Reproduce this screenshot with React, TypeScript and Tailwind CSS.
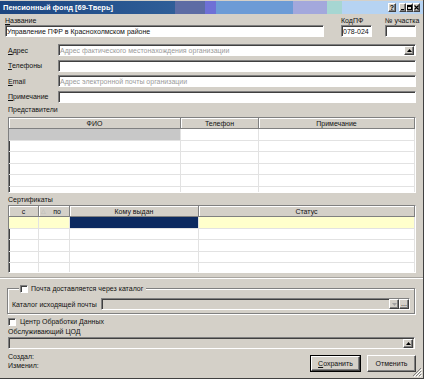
import React from "react";

const sunken =
  "border border-t-[#808080] border-l-[#808080] border-b-white border-r-white shadow-[inset_1px_1px_0_#404040]";
const raised =
  "border border-t-white border-l-white border-b-[#404040] border-r-[#404040] shadow-[inset_-1px_-1px_0_#808080]";

function U({ c }: { c: string }) {
  return <span className="underline underline-offset-1">{c}</span>;
}

function UpBtn() {
  return (
    <div className={`${raised} bg-[#d4d0c8] w-[10px] h-[9px] flex items-center justify-center shrink-0`}>
      <svg width="5" height="3" viewBox="0 0 5 3">
        <polygon points="0,3 5,3 2.5,0" fill="#000" />
      </svg>
    </div>
  );
}

function Field({
  w,
  text,
  placeholder,
  disabled,
  up,
}: {
  w: string;
  text?: string;
  placeholder?: string;
  disabled?: boolean;
  up?: boolean;
}) {
  return (
    <div
      className={`${sunken} ${w} h-[12px] ${disabled ? "bg-[#d4d0c8]" : "bg-white"} flex items-center pl-[1px] pr-[1px] overflow-hidden`}
    >
      <span
        className={`flex-1 whitespace-nowrap leading-[9px] ${placeholder ? "text-[#9a9a9a]" : "text-[#111]"}`}
      >
        {text ?? placeholder ?? ""}
      </span>
      {up && <UpBtn />}
    </div>
  );
}

function Grid({
  cols,
  headers,
  rows,
  height,
  cellClass,
  headerRender,
}: {
  cols: number[];
  headers: string[];
  rows: number;
  height: string;
  cellClass: (r: number, c: number) => string;
  headerRender?: (i: number) => React.ReactNode;
}) {
  return (
    <div className={`${sunken} ml-[8px] w-[408px] ${height} bg-white overflow-hidden`}>
      <div className="flex h-[11px] bg-[#d4d0c8]">
        {cols.map((w, i) => (
          <div
            key={i}
            style={{ width: w, flexGrow: i === cols.length - 1 ? 1 : 0 }}
            className="shrink-0 h-full border-r border-b border-r-[#808080] border-b-[#808080] shadow-[inset_1px_1px_0_white] flex items-center justify-center leading-[9px] relative"
          >
            {headerRender ? headerRender(i) : headers[i]}
          </div>
        ))}
      </div>
      {Array.from({ length: rows }).map((_, r) => (
        <div key={r} className="flex h-[11.5px]">
          {cols.map((w, c) => (
            <div
              key={c}
              style={{ width: w, flexGrow: c === cols.length - 1 ? 1 : 0 }}
              className={`shrink-0 h-full border-r border-b border-r-[#e2e2e2] border-b-[#e2e2e2] ${cellClass(r, c)}`}
            />
          ))}
        </div>
      ))}
    </div>
  );
}

function Check({ className = "" }: { className?: string }) {
  return <div className={`${sunken} w-[8px] h-[8px] bg-white shrink-0 ${className}`} />;
}

function Btn({ w, children, def }: { w: string; children: React.ReactNode; def?: boolean }) {
  return (
    <div className={`${def ? "border border-black" : ""}`}>
      <div className={`${raised} bg-[#d4d0c8] ${w} ${def ? "h-[15px]" : "h-[17px]"} flex items-center justify-center leading-[9px]`}>
        {children}
      </div>
    </div>
  );
}

export default function App() {
  return (
    <div className="w-[424px] h-[379px] bg-[#d4d0c8] overflow-hidden relative font-['Liberation_Sans',Arial,sans-serif] text-[7px] text-[#111] border-r border-b border-r-[#404040] border-b-[#404040]">
      {/* Title bar */}
      <div className="mt-[1px] h-[13px] flex">
        <div className="w-[175px] bg-gradient-to-r from-[#1c4580] to-[#2f5e98] flex items-center pl-[3px]">
          <span className="text-white font-bold text-[7.5px] leading-[10px] whitespace-nowrap">
            Пенсионный фонд [69-Тверь]
          </span>
        </div>
        <div className="w-[30px] bg-[#5d6ca4]" />
        <div className="w-[11px] bg-[#6e70d6]" />
        <div className="w-[77px] bg-[#6c9bd6]" />
        <div className="w-[34px] bg-[#a3a8dc]" />
        <div className="w-[15px] bg-[#a6d6d2]" />
        <div className="flex-1 bg-[#b6d3f2] flex items-center justify-end pr-[3px]">
          <div className={`${raised} bg-[#d4d0c8] w-[8px] h-[9px] flex items-center justify-center text-[7px] font-bold leading-none text-black`}>
            ?
          </div>
          <div className="w-[3px]" />
          <div className={`${raised} bg-[#d4d0c8] w-[7px] h-[9px] flex items-end justify-center pb-[1px]`}>
            <div className="w-[3px] h-[1px] bg-black" />
          </div>
          <div className={`${raised} bg-[#d4d0c8] w-[7px] h-[9px] flex items-center justify-center`}>
            <div className="w-[5px] h-[5px] border border-black border-t-2" />
          </div>
          <div className={`${raised} bg-[#d4d0c8] w-[7px] h-[9px] flex items-center justify-center`}>
            <svg width="5" height="5" viewBox="0 0 5 5">
              <path d="M0.5 0.5L4.5 4.5M4.5 0.5L0.5 4.5" stroke="#000" strokeWidth="1.2" />
            </svg>
          </div>
        </div>
      </div>

      {/* Top row */}
      <div className="mt-[2px] flex pl-[5px]">
        <div className="w-[319px]">
          <div className="h-[9px] leading-[9px]">
            <U c="Н" />азвание
          </div>
          <Field w="w-full" text="Управление ПФР в Краснохолмском районе" />
        </div>
        <div className="w-[31px] ml-[17px]">
          <div className="h-[9px] leading-[9px] whitespace-nowrap">КодПФ</div>
          <Field w="w-full" text="078-024" />
        </div>
        <div className="w-[31px] ml-[13px]">
          <div className="h-[9px] leading-[9px] whitespace-nowrap">№ участка</div>
          <Field w="w-full" />
        </div>
      </div>

      {/* Field rows */}
      <div className="mt-[7px] flex flex-col gap-[3.5px]">
        <div className="flex items-center pl-[8px]">
          <div className="w-[50px] leading-[9px]">
            <U c="А" />дрес
          </div>
          <Field w="w-[358px]" placeholder="Адрес фактического местонахождения организации" up />
        </div>
        <div className="flex items-center pl-[8px]">
          <div className="w-[50px] leading-[9px]">
            <U c="Т" />елефоны
          </div>
          <Field w="w-[358px]" />
        </div>
        <div className="flex items-center pl-[8px]">
          <div className="w-[50px] leading-[9px]">
            <U c="E" />mail
          </div>
          <Field w="w-[358px]" placeholder="Адрес электронной почты организации" />
        </div>
        <div className="flex items-center pl-[8px]">
          <div className="w-[50px] leading-[9px]">
            <U c="П" />римечание
          </div>
          <Field w="w-[358px]" />
        </div>
      </div>

      {/* Representatives */}
      <div className="h-[14.5px] flex items-center pl-[8px] leading-[9px]">Представители</div>
      <Grid
        cols={[172, 78, 156]}
        headers={["ФИО", "Телефон", "Примечание"]}
        rows={6}
        height="h-[76px]"
        cellClass={(r, c) => (r === 0 && c === 0 ? "bg-[#c8c8c8]" : "")}
      />

      {/* Certificates */}
      <div className="h-[12px] flex items-center pl-[8px] leading-[9px]">Сертификаты</div>
      <Grid
        cols={[30, 31, 129, 216]}
        headers={["с", "по", "Кому выдан", "Статус"]}
        rows={5}
        height="h-[68px]"
        headerRender={(i) =>
          i === 1 ? (
            <>
              <span className="absolute left-[2px] top-[1px] text-[#b0b0b0] text-[6px] leading-[8px]">△</span>
              <span className="ml-[6px]">по</span>
            </>
          ) : (
            ["с", "по", "Кому выдан", "Статус"][i]
          )
        }
        cellClass={(r, c) =>
          r === 0 ? (c === 2 ? "bg-[#0c2a60]" : "bg-[#ffffcc]") : ""
        }
      />

      {/* separator */}
      <div className="mt-[4px] h-[2px] border-t border-t-[#a8a5a0] border-b border-b-white" />

      {/* Group box */}
      <div className="relative mt-[9px] ml-[7px] w-[408px] h-[26px] border border-[#808080] shadow-[inset_1px_1px_0_white,1px_1px_0_white]">
        <div className="absolute -top-[5px] left-[11px] flex items-center bg-[#d4d0c8] px-[1px] h-[9px]">
          <Check />
          <span className="ml-[3px] pr-[2px] leading-[9px] whitespace-nowrap">Почта доставляется через каталог</span>
        </div>
        <div className="flex items-center mt-[9px] pl-[4px]">
          <div className="w-[89px] leading-[9px] whitespace-nowrap">Каталог исходящей почты</div>
          <div className={`${sunken} w-[309px] h-[12px] bg-[#d4d0c8] flex items-center justify-end`}>
            <div className={`${raised} bg-[#d4d0c8] w-[10px] h-[10px] flex items-center justify-center`}>
              <svg width="5" height="3" viewBox="0 0 5 3">
                <polygon points="0,0 5,0 2.5,3" fill="#a0a0a0" />
              </svg>
            </div>
            <div className={`${raised} bg-[#d4d0c8] w-[10px] h-[10px] flex items-end justify-center pb-[1px] text-[7px] leading-[6px] text-black`}>
              ...
            </div>
          </div>
        </div>
      </div>

      {/* COD checkbox */}
      <div className="mt-[3px] h-[9px] flex items-center pl-[8px]">
        <Check />
        <span className="ml-[4px] leading-[9px]">Центр Обработки Данных</span>
      </div>
      <div className="h-[10px] flex items-center pl-[8px] leading-[9px]">Обслуживающий ЦОД</div>
      <div className="mt-[1px] pl-[8px]">
        <Field w="w-[407px]" disabled up />
      </div>

      {/* Bottom */}
      <div className="flex justify-between pl-[8px] pr-[7px] mt-[3px]">
        <div className="flex flex-col">
          <div className="h-[9px] leading-[9px]">Создал:</div>
          <div className="h-[9px] leading-[9px]">Изменил:</div>
        </div>
        <div className="flex gap-[6px] mt-[3px]">
          <Btn w="w-[49px]" def>
            <span>
              <U c="С" />охранить
            </span>
          </Btn>
          <Btn w="w-[49px]">Отменить</Btn>
        </div>
      </div>

      {/* resize grip */}
      <svg className="absolute right-[1px] bottom-[1px]" width="10" height="10" viewBox="0 0 10 10">
        <path d="M9 1L1 9M9 4L4 9M9 7L7 9" stroke="#808080" strokeWidth="1" />
        <path d="M10 2L2 10M10 5L5 10M10 8L8 10" stroke="#ffffff" strokeWidth="1" />
      </svg>
    </div>
  );
}
